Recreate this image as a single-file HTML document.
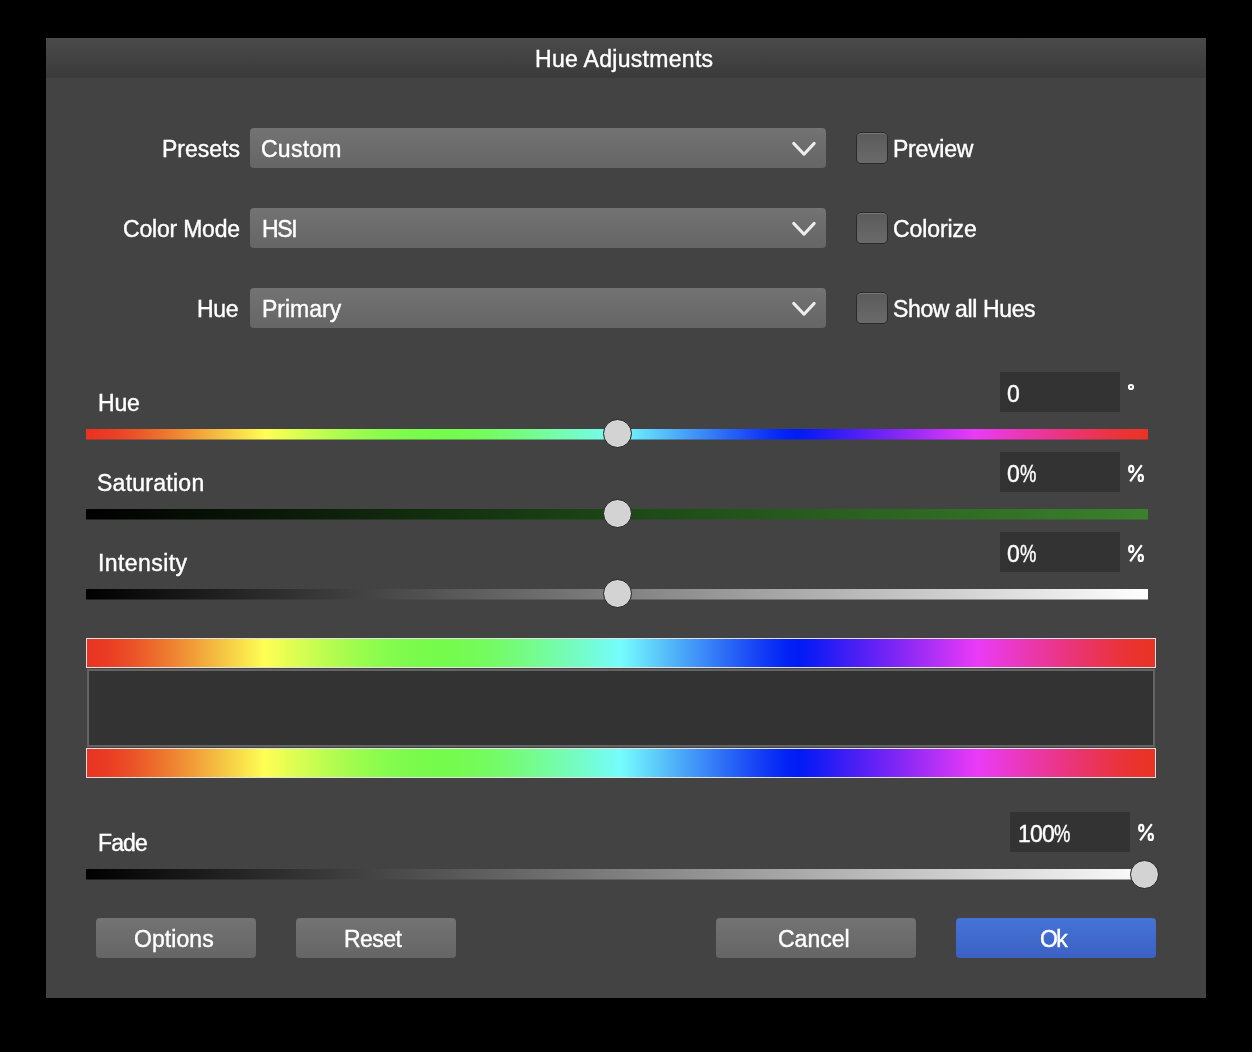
<!DOCTYPE html>
<html><head><meta charset="utf-8">
<style>
html,body{margin:0;padding:0;background:#000;width:1252px;height:1052px;overflow:hidden}
*{box-sizing:border-box}
body{font-family:"Liberation Sans",sans-serif;color:#fff;position:relative}
.abs{position:absolute}
.dlg{position:absolute;left:46px;top:38px;width:1160px;height:960px;background:#434343}
.title{position:absolute;left:46px;top:38px;width:1160px;height:40px;background:linear-gradient(#4a4a4a,#3a3a3a)}
.t{position:absolute;font-size:23px;line-height:26px;white-space:nowrap;color:#fff;will-change:transform;-webkit-text-stroke:0.4px #fff}
.dd{position:absolute;left:250px;width:576px;height:40px;border-radius:4px;background:linear-gradient(#737373,#656565)}
.cb{position:absolute;left:856px;width:32px;height:32px;border-radius:5px;border:1.5px solid #2a2a2a;background:linear-gradient(#5a5a5a,#6a6a6a);box-shadow:inset 0 1px 0 #787878}
.track{position:absolute;left:86px;width:1062px;height:11px;box-shadow:inset 0 -1px 0 rgba(67,67,67,0.5)}
.thumb{position:absolute;width:29px;height:29px;border-radius:50%;background:#d3d3d3;border:1.5px solid #1e1e1e}
.inp{position:absolute;width:120px;height:40px;background:#333}
.btn{position:absolute;top:918px;height:40px;border-radius:4px;background:linear-gradient(#737373,#656565)}
.spec{position:absolute;left:86px;width:1070px;height:30px;border:1px solid #e2e2e2;
background:linear-gradient(90deg,#ea3323 0.00%,#ea3924 1.39%,#ea4325 2.78%,#eb5128 4.17%,#ec622b 5.56%,#ed742e 6.94%,#ef8633 8.33%,#f19a37 9.72%,#f3ae3d 11.11%,#f5c242 12.50%,#f8d648 13.89%,#fbeb4e 15.28%,#ffff54 16.67%,#eefe53 18.06%,#ddfe52 19.44%,#cdfd51 20.83%,#bdfd50 22.22%,#aefc4f 23.61%,#a0fc4e 25.00%,#94fc4d 26.39%,#89fc4d 27.78%,#81fb4d 29.17%,#7bfb4c 30.56%,#77fb4c 31.94%,#75fb4c 33.33%,#75fb50 34.72%,#75fb56 36.11%,#75fb61 37.50%,#75fb6e 38.89%,#75fb7d 40.28%,#75fc8d 41.67%,#75fc9f 43.06%,#75fcb1 44.44%,#75fcc3 45.83%,#75fcd6 47.22%,#75fcea 48.61%,#75fdfd 50.00%,#6be8fc 51.39%,#60d3fa 52.78%,#56bef9 54.17%,#4baaf8 55.56%,#4195f7 56.94%,#3781f7 58.33%,#2c6cf6 59.72%,#2259f6 61.11%,#1845f5 62.50%,#0d34f5 63.89%,#0425f5 65.28%,#001bf5 66.67%,#121bf5 68.06%,#261cf5 69.44%,#3a1ef5 70.83%,#4d1ff5 72.22%,#6122f5 73.61%,#7425f5 75.00%,#8828f5 76.39%,#9c2bf6 77.78%,#af2ff6 79.17%,#c333f6 80.56%,#d637f6 81.94%,#ea3bf7 83.33%,#ea3ae3 84.72%,#ea39ce 86.11%,#ea38ba 87.50%,#ea37a6 88.89%,#ea3693 90.28%,#ea357f 91.67%,#ea346c 93.06%,#ea3459 94.44%,#ea3447 95.83%,#ea3337 97.22%,#ea332b 98.61%,#ea3323 100.00%)}
</style></head><body>
<div class="dlg"></div>
<div class="title"></div>
<div class="t" style="left:534.5px;top:46px;letter-spacing:0.3px">Hue Adjustments</div>

<div class="dd" style="top:128px"></div>
<div class="dd" style="top:208px"></div>
<div class="dd" style="top:288px"></div>
<div class="t" style="left:162px;top:136px">Presets</div>
<div class="t" style="left:122.5px;top:216px;letter-spacing:-0.2px">Color Mode</div>
<div class="t" style="left:197.3px;top:296px;letter-spacing:-0.3px">Hue</div>
<div class="t" style="left:261.20000000000005px;top:136px;letter-spacing:0.25px">Custom</div>
<div class="t" style="left:262px;top:216.0px;letter-spacing:-1.3px">HSI</div>
<div class="t" style="left:262px;top:296px">Primary</div>
<svg class="abs" style="left:780px;top:120px" width="60" height="240" viewBox="0 0 60 240">
<g fill="none" stroke="#eeeeee" stroke-width="3" stroke-linecap="round" stroke-linejoin="round">
<polyline points="13.7,23.4 24,34.2 34.2,23.4"/>
<polyline points="13.7,103.4 24,114.2 34.2,103.4"/>
<polyline points="13.7,183.4 24,194.2 34.2,183.4"/>
</g></svg>

<div class="cb" style="top:132px"></div>
<div class="cb" style="top:212px"></div>
<div class="cb" style="top:292px"></div>
<div class="t" style="left:893px;top:136px;letter-spacing:-0.25px">Preview</div>
<div class="t" style="left:892.5px;top:216px;letter-spacing:-0.08px">Colorize</div>
<div class="t" style="left:892.5px;top:296px;letter-spacing:-0.37px">Show all Hues</div>

<div class="t" style="left:97.5px;top:390px;letter-spacing:-0.2px">Hue</div>
<div class="t" style="left:96.5px;top:470px;letter-spacing:0.26px">Saturation</div>
<div class="t" style="left:97.5px;top:550px;letter-spacing:0.43px">Intensity</div>
<div class="inp" style="left:1000px;top:372px"></div>
<div class="inp" style="left:1000px;top:452px"></div>
<div class="inp" style="left:1000px;top:532px"></div>
<div class="t" style="left:1007px;top:381px">0</div>
<div class="t" style="left:1007px;top:461px">0<span style="display:inline-block;transform:scaleX(0.8);transform-origin:0 0">%</span></div>
<div class="t" style="left:1007px;top:541px">0<span style="display:inline-block;transform:scaleX(0.8);transform-origin:0 0">%</span></div>
<svg class="abs" style="left:1122px;top:378px" width="18" height="18" viewBox="0 0 18 18"><circle cx="9" cy="9" r="2.1" fill="none" stroke="#fff" stroke-width="2"/></svg>
<svg class="abs" style="left:1122px;top:458.5px" width="30" height="30" viewBox="0 0 30 30"><g fill="none" stroke="#fff" stroke-width="2.2"><ellipse cx="9.25" cy="10" rx="2.1" ry="3.2"/><ellipse cx="18.75" cy="18.9" rx="2.15" ry="3.1"/><line x1="8.2" y1="22.4" x2="19.8" y2="6.2"/></g></svg>
<svg class="abs" style="left:1122px;top:538.5px" width="30" height="30" viewBox="0 0 30 30"><g fill="none" stroke="#fff" stroke-width="2.2"><ellipse cx="9.25" cy="10" rx="2.1" ry="3.2"/><ellipse cx="18.75" cy="18.9" rx="2.15" ry="3.1"/><line x1="8.2" y1="22.4" x2="19.8" y2="6.2"/></g></svg>

<div class="track" style="top:429px;background:linear-gradient(90deg,#ea3323 0.00%,#ea3924 1.39%,#ea4325 2.78%,#eb5128 4.17%,#ec622b 5.56%,#ed742e 6.94%,#ef8633 8.33%,#f19a37 9.72%,#f3ae3d 11.11%,#f5c242 12.50%,#f8d648 13.89%,#fbeb4e 15.28%,#ffff54 16.67%,#eefe53 18.06%,#ddfe52 19.44%,#cdfd51 20.83%,#bdfd50 22.22%,#aefc4f 23.61%,#a0fc4e 25.00%,#94fc4d 26.39%,#89fc4d 27.78%,#81fb4d 29.17%,#7bfb4c 30.56%,#77fb4c 31.94%,#75fb4c 33.33%,#75fb50 34.72%,#75fb56 36.11%,#75fb61 37.50%,#75fb6e 38.89%,#75fb7d 40.28%,#75fc8d 41.67%,#75fc9f 43.06%,#75fcb1 44.44%,#75fcc3 45.83%,#75fcd6 47.22%,#75fcea 48.61%,#75fdfd 50.00%,#6be8fc 51.39%,#60d3fa 52.78%,#56bef9 54.17%,#4baaf8 55.56%,#4195f7 56.94%,#3781f7 58.33%,#2c6cf6 59.72%,#2259f6 61.11%,#1845f5 62.50%,#0d34f5 63.89%,#0425f5 65.28%,#001bf5 66.67%,#121bf5 68.06%,#261cf5 69.44%,#3a1ef5 70.83%,#4d1ff5 72.22%,#6122f5 73.61%,#7425f5 75.00%,#8828f5 76.39%,#9c2bf6 77.78%,#af2ff6 79.17%,#c333f6 80.56%,#d637f6 81.94%,#ea3bf7 83.33%,#ea3ae3 84.72%,#ea39ce 86.11%,#ea38ba 87.50%,#ea37a6 88.89%,#ea3693 90.28%,#ea357f 91.67%,#ea346c 93.06%,#ea3459 94.44%,#ea3447 95.83%,#ea3337 97.22%,#ea332b 98.61%,#ea3323 100.00%);background-size:1062px 10px;background-position:3px 0"></div>
<div class="track" style="top:509px;background:linear-gradient(90deg,#000 0%,#1c4716 50%,#3b812c 100%)"></div>
<div class="track" style="top:589px;background:linear-gradient(90deg,#000,#fff)"></div>
<div class="thumb" style="left:602.5px;top:419.2px"></div>
<div class="thumb" style="left:602.5px;top:499.2px"></div>
<div class="thumb" style="left:602.5px;top:579.2px"></div>

<div class="spec" style="top:638px"></div>
<div class="abs" style="left:87px;top:669px;width:1068px;height:78px;border:2px solid #646464;background:#333"></div>
<div class="spec" style="top:748px"></div>

<div class="t" style="left:97.5px;top:830px;letter-spacing:-0.9px">Fade</div>
<div class="inp" style="left:1010px;top:812px"></div>
<div class="t" style="left:1017.7px;top:821px;letter-spacing:-0.85px">100<span style="display:inline-block;transform:scaleX(0.8);transform-origin:0 0">%</span></div>
<svg class="abs" style="left:1132px;top:817.5px" width="30" height="30" viewBox="0 0 30 30"><g fill="none" stroke="#fff" stroke-width="2.2"><ellipse cx="9.25" cy="10" rx="2.1" ry="3.2"/><ellipse cx="18.75" cy="18.9" rx="2.15" ry="3.1"/><line x1="8.2" y1="22.4" x2="19.8" y2="6.2"/></g></svg>
<div class="track" style="top:869px;width:1072px;background:linear-gradient(90deg,#000,#fff)"></div>
<div class="thumb" style="left:1129.5px;top:859.5px"></div>

<div class="btn" style="left:96px;width:160px"></div>
<div class="btn" style="left:296px;width:160px"></div>
<div class="btn" style="left:716px;width:200px"></div>
<div class="btn" style="left:956px;width:200px;background:linear-gradient(#4673d6,#3b61c3)"></div>
<div class="t" style="left:134px;top:926px;letter-spacing:0.08px">Options</div>
<div class="t" style="left:344.0px;top:926px;letter-spacing:-0.55px">Reset</div>
<div class="t" style="left:778px;top:926px">Cancel</div>
<div class="t" style="left:1040.4px;top:926px;letter-spacing:-1.6px">Ok</div>
</body></html>
